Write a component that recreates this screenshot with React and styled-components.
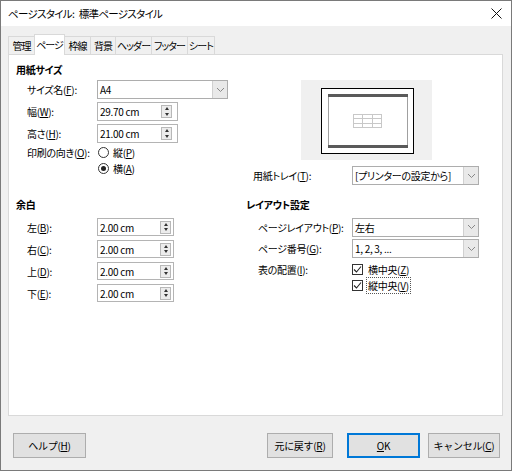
import React from 'react';
import styled, { createGlobalStyle, css } from 'styled-components';

const GlobalStyle = createGlobalStyle`
  body {
    margin: 0;
    font-family: "Noto Sans CJK JP", "Noto Sans", sans-serif;
    font-size: 10px;
    letter-spacing: -0.3px;
    color: #000;
    font-feature-settings: "palt";
  }
  * { box-sizing: border-box; }
`;

const Window = styled.div`
  width: 512px;
  height: 471px;
  border: 1px solid #7a7a7a;
  background: #f0f0f0;
  display: flex;
  flex-direction: column;
`;

const TitleBar = styled.div`
  height: 25px;
  background: #fff;
  display: flex;
  align-items: center;
  justify-content: space-between;
  padding: 0 9px 0 7px;
  font-size: 10.5px;
  letter-spacing: -0.7px;
  word-spacing: 3px;
`;

const Body = styled.div`
  padding: 8px 8px 0 7px;
  display: flex;
  flex-direction: column;
`;

const TabRow = styled.div`
  display: flex;
  align-items: flex-end;
  height: 20px;
`;

const Tab = styled.div`
  width: ${(p) => p.$w}px;
  height: 18px;
  border: 1px solid #d9d9d9;
  border-bottom: none;
  margin-right: -1px;
  background: #f0f0f0;
  display: flex;
  align-items: center;
  justify-content: center;
  white-space: nowrap;
  letter-spacing: -0.9px;
  ${(p) =>
    p.$active &&
    css`
      height: 21px;
      background: #fff;
      margin-bottom: -1px;
      position: relative;
      z-index: 1;
      padding-bottom: 2px;
    `}
`;

const Panel = styled.div`
  height: 362px;
  background: #fff;
  border: 1px solid #d9d9d9;
  padding: 7px 0 0 7px;
  display: grid;
  grid-template-columns: 230px 1fr;
  grid-template-rows: 123px auto;
  row-gap: 12px;
`;

const Section = styled.div`
  display: flex;
  flex-direction: column;
`;

const Heading = styled.div`
  height: 15px;
  line-height: 15px;
  font-weight: bold;
  margin-bottom: ${(p) => p.$gap || 3}px;
`;

const Row = styled.div`
  display: flex;
  align-items: center;
  height: ${(p) => p.$h || 19}px;
  padding-left: ${(p) => p.$indent || 11}px;
  margin-bottom: ${(p) => (p.$mb === undefined ? 3 : p.$mb)}px;
  margin-top: ${(p) => p.$mt || 0}px;
`;

const Label = styled.div`
  width: ${(p) => p.$w || 70}px;
  flex-shrink: 0;
  white-space: nowrap;
`;

const SelectBox = styled.div`
  width: ${(p) => p.$w}px;
  height: ${(p) => p.$h || 19}px;
  border: 1px solid #adadad;
  background: #fff;
  display: flex;
  align-items: center;
  justify-content: space-between;
  padding-left: 2px;
  white-space: nowrap;
  overflow: hidden;
`;

const DropButton = styled.div`
  width: 15px;
  height: 100%;
  flex-shrink: 0;
  border-left: 1px solid #d0d0d0;
  background: #e9e9e9;
  display: flex;
  align-items: center;
  justify-content: center;
`;

const SpinField = styled.div`
  width: ${(p) => p.$w}px;
  height: ${(p) => p.$h || 19}px;
  border: 1px solid #b4b4b4;
  background: #fff;
  display: flex;
  align-items: center;
  justify-content: space-between;
  padding: 0 ${(p) => p.$pr || 3}px 0 2px;
`;

const SpinButton = styled.div`
  width: 11px;
  height: 13px;
  border: 1px solid #b8b8b8;
  background: #ececec;
  display: flex;
  flex-direction: column;
  align-items: center;
  justify-content: space-around;
`;

const Arrow = styled.div`
  width: 0;
  height: 0;
  border-left: 2.5px solid transparent;
  border-right: 2.5px solid transparent;
  ${(p) => (p.$down ? 'border-top: 3px solid #333;' : 'border-bottom: 3px solid #333;')}
`;

const Radio = styled.span`
  width: 11px;
  height: 11px;
  border: 1px solid #333;
  border-radius: 50%;
  display: inline-flex;
  align-items: center;
  justify-content: center;
  margin: 0 4px 0 1px;
  background: #fff;
  &::after {
    content: '';
    width: 5px;
    height: 5px;
    border-radius: 50%;
    background: ${(p) => (p.$on ? '#222' : 'transparent')};
  }
`;

const Check = styled.span`
  width: 11px;
  height: 11px;
  border: 1px solid #333;
  display: inline-flex;
  align-items: center;
  justify-content: center;
  margin-right: 3px;
`;

const Choice = styled.div`
  display: flex;
  align-items: center;
`;

const ChoiceText = styled.span`
  padding: 0 1px;
  border: 1px ${(p) => (p.$focus ? 'dotted #555' : 'solid transparent')};
`;

const PreviewBox = styled.div`
  width: 131px;
  height: 80px;
  margin: 18px 0 0 55px;
  background: #f0f0f0;
`;

const Footer = styled.div`
  display: flex;
  align-items: center;
  padding: 17px 11px 0 12px;
`;

const Button = styled.button`
  height: 25px;
  width: ${(p) => p.$w}px;
  margin-left: ${(p) => p.$ml || 0}px;
  background: #e1e1e1;
  border: 1px solid #adadad;
  font-family: inherit;
  font-size: 10px;
  letter-spacing: inherit;
  color: #000;
  padding: 0;
  ${(p) =>
    p.$primary &&
    css`
      border-color: #0078d7;
      box-shadow: inset 0 0 0 1px #0078d7;
    `}
`;

const Spacer = styled.div`
  flex: 1;
`;

const Chevron = () => (
  <svg width="9" height="6" viewBox="0 0 9 6">
    <polyline points="1,1 4.5,4.5 8,1" fill="none" stroke="#888" strokeWidth="1" />
  </svg>
);

const Select = ({ w, value }) => (
  <SelectBox $w={w}>
    <span>{value}</span>
    <DropButton>
      <Chevron />
    </DropButton>
  </SelectBox>
);

const Spin = ({ w, value, h, pr }) => (
  <SpinField $w={w} $h={h} $pr={pr}>
    <span>{value}</span>
    <SpinButton>
      <Arrow />
      <Arrow $down />
    </SpinButton>
  </SpinField>
);

const CheckMark = () => (
  <svg width="9" height="9" viewBox="0 0 9 9">
    <polyline points="1,4.5 3.5,7 8,1.5" fill="none" stroke="#222" strokeWidth="1.1" />
  </svg>
);

const PagePreview = () => (
  <PreviewBox>
    <svg width="131" height="80" viewBox="0 0 131 80">
      <rect x="20.5" y="8.5" width="92" height="65" fill="#fff" stroke="#000" />
      <rect x="27.5" y="14.5" width="79" height="53" fill="#fff" stroke="#a0a0a0" />
      <rect x="27" y="14" width="80" height="3" fill="#5a5a5a" />
      <rect x="27" y="65" width="80" height="3" fill="#5a5a5a" />
      <g stroke="#c8c8c8" fill="none">
        <rect x="52.5" y="34.5" width="28" height="13" />
        <line x1="61.5" y1="34.5" x2="61.5" y2="47.5" />
        <line x1="71.5" y1="34.5" x2="71.5" y2="47.5" />
        <line x1="52.5" y1="38.5" x2="80.5" y2="38.5" />
        <line x1="52.5" y1="43.5" x2="80.5" y2="43.5" />
      </g>
    </svg>
  </PreviewBox>
);

const tabs = [
  ['管理', 27],
  ['ページ', 31],
  ['枠線', 27],
  ['背景', 26],
  ['ヘッダー', 37],
  ['フッター', 37],
  ['シート', 28],
];

const margins = [
  ['左', 'B'],
  ['右', 'C'],
  ['上', 'D'],
  ['下', 'E'],
];

export default function App() {
  return (
    <>
      <GlobalStyle />
      <Window>
        <TitleBar>
          <span>ページスタイル: 標準ページスタイル</span>
          <svg width="11" height="11" viewBox="0 0 11 11">
            <path d="M0.5 0.5 L10.5 10.5 M10.5 0.5 L0.5 10.5" stroke="#111" strokeWidth="1" />
          </svg>
        </TitleBar>
        <Body>
          <TabRow>
            {tabs.map(([t, w]) => (
              <Tab key={t} $w={w} $active={t === 'ページ'}>
                {t}
              </Tab>
            ))}
          </TabRow>
          <Panel>
            <Section>
              <Heading>用紙サイズ</Heading>
              <Row>
                <Label>サイズ名(<u>F</u>):</Label>
                <Select w={131} value="A4" />
              </Row>
              <Row>
                <Label>幅(<u>W</u>):</Label>
                <Spin w={81} value="29.70 cm" pr={5} />
              </Row>
              <Row $mb={1}>
                <Label>高さ(<u>H</u>):</Label>
                <Spin w={81} value="21.00 cm" pr={5} />
              </Row>
              <Row $h={16} $mb={0}>
                <Label>印刷の向き(<u>O</u>):</Label>
                <Choice>
                  <Radio />
                  <span>縦(<u>P</u>)</span>
                </Choice>
              </Row>
              <Row $h={16} $mb={0}>
                <Label />
                <Choice>
                  <Radio $on />
                  <span>横(<u>A</u>)</span>
                </Choice>
              </Row>
            </Section>

            <Section>
              <PagePreview />
              <Row $mt={6} $indent={7} $mb={0}>
                <Label $w={99}>用紙トレイ(<u>T</u>):</Label>
                <Select w={127} value="[プリンターの設定から]" />
              </Row>
            </Section>

            <Section>
              <Heading $gap={6}>余白</Heading>
              {margins.map(([k, m]) => (
                <Row key={m} $h={18} $mb={4}>
                  <Label>
                    {k}(<u>{m}</u>):
                  </Label>
                  <Spin w={77} h={18} value="2.00 cm" pr={2} />
                </Row>
              ))}
            </Section>

            <Section>
              <Heading $gap={6}>レイアウト設定</Heading>
              <Row $indent={12} $h={18} $mb={3}>
                <Label $w={94}>ページレイアウト(<u>P</u>):</Label>
                <Select w={127} value="左右" />
              </Row>
              <Row $indent={12} $h={19} $mb={3}>
                <Label $w={94}>ページ番号(<u>G</u>):</Label>
                <Select w={127} value="1, 2, 3, ..." />
              </Row>
              <Row $indent={12} $h={16} $mb={0}>
                <Label $w={94}>表の配置(<u>I</u>):</Label>
                <Choice>
                  <Check>
                    <CheckMark />
                  </Check>
                  <ChoiceText>横中央(<u>Z</u>)</ChoiceText>
                </Choice>
              </Row>
              <Row $indent={12} $h={16} $mb={0}>
                <Label $w={94} />
                <Choice>
                  <Check>
                    <CheckMark />
                  </Check>
                  <ChoiceText $focus>縦中央(<u>V</u>)</ChoiceText>
                </Choice>
              </Row>
            </Section>
          </Panel>
        </Body>
        <Footer>
          <Button $w={73}>
            ヘルプ(<u>H</u>)
          </Button>
          <Spacer />
          <Button $w={66}>
            元に戻す(<u>R</u>)
          </Button>
          <Button $w={73} $ml={14} $primary>
            <u>O</u>K
          </Button>
          <Button $w={72} $ml={8}>
            キャンセル(<u>C</u>)
          </Button>
        </Footer>
      </Window>
    </>
  );
}
